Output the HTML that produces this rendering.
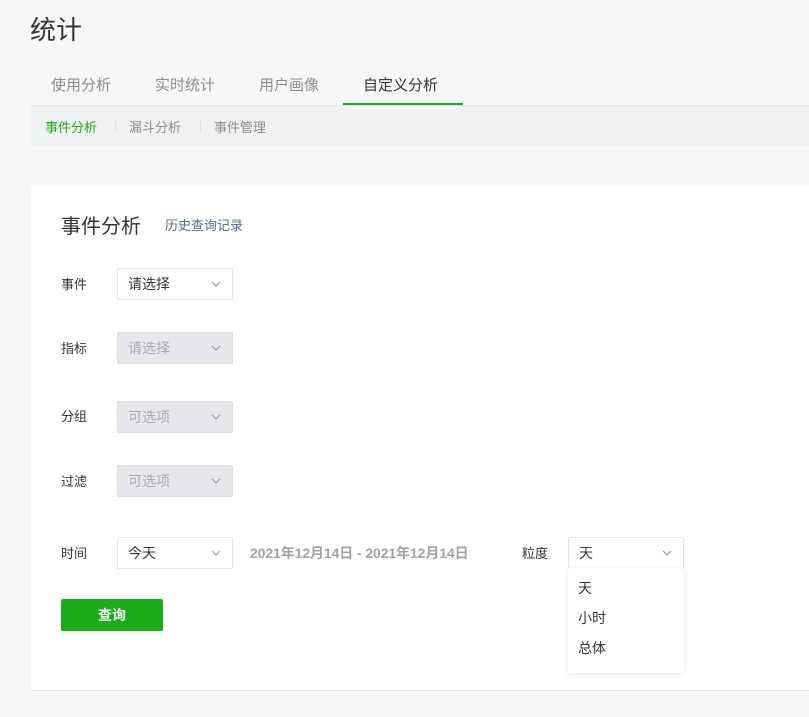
<!DOCTYPE html>
<html><head><meta charset="utf-8"><style>
*{margin:0;padding:0;box-sizing:border-box}
body{width:809px;height:717px;background:#f6f7f9;font-family:"Liberation Sans","Noto Sans CJK SC",sans-serif;position:relative;overflow:hidden;color:#353535}
.a{position:absolute;white-space:nowrap}
.sel{position:absolute;width:116px;height:32px;border:1px solid #e4e4e6;border-radius:2px;background:#fff;font-size:14px;line-height:30px;padding-left:10px;color:#353535}
.sel.d{background:#e7e7eb;color:#aaa;border-color:#ddd}
.sel svg{position:absolute;right:11px;top:12px}
.lbl{position:absolute;left:61px;font-size:13px;color:#353535}
</style></head><body>
<div class="a" style="left:30px;top:10px;font-size:26px;color:#353535">统计</div>
<div class="a" style="left:31px;top:105px;width:778px;height:1px;background:#e4e6e9"></div>
<div class="a" style="left:51px;top:74px;font-size:15px;color:#8d8d8d">使用分析</div>
<div class="a" style="left:155px;top:74px;font-size:15px;color:#8d8d8d">实时统计</div>
<div class="a" style="left:259px;top:74px;font-size:15px;color:#8d8d8d">用户画像</div>
<div class="a" style="left:363px;top:74px;font-size:15px;color:#353535">自定义分析</div>
<div class="a" style="left:343px;top:103px;width:120px;height:2px;background:#1aad19"></div>
<div class="a" style="left:31px;top:106px;width:778px;height:40px;background:#f0f1f3"></div>
<div class="a" style="left:45px;top:117px;font-size:13px;color:#1aad19">事件分析</div>
<div class="a" style="left:115px;top:119px;width:1px;height:14px;background:#e0e0e0"></div>
<div class="a" style="left:129px;top:117px;font-size:13px;color:#8d8d8d">漏斗分析</div>
<div class="a" style="left:200px;top:119px;width:1px;height:14px;background:#e0e0e0"></div>
<div class="a" style="left:214px;top:117px;font-size:13px;color:#8d8d8d">事件管理</div>
<div class="a" style="left:31px;top:186px;width:778px;height:505px;background:#fff;border-bottom:1px solid #e4e6e9"></div>
<div class="a" style="left:61px;top:210px;font-size:20px;color:#353535">事件分析</div>
<div class="a" style="left:165px;top:215px;font-size:13px;color:#576b95">历史查询记录</div>
<div class="lbl" style="top:274px">事件</div>
<div class="sel" style="left:117px;top:268px">请选择<svg width="10" height="6"><path d="M1 1l4 4 4-4" fill="none" stroke="#999" stroke-width="1.2"/></svg></div>
<div class="lbl" style="top:338px">指标</div>
<div class="sel d" style="left:117px;top:332px">请选择<svg width="10" height="6"><path d="M1 1l4 4 4-4" fill="none" stroke="#999" stroke-width="1.2"/></svg></div>
<div class="lbl" style="top:406px">分组</div>
<div class="sel d" style="left:117px;top:401px">可选项<svg width="10" height="6"><path d="M1 1l4 4 4-4" fill="none" stroke="#999" stroke-width="1.2"/></svg></div>
<div class="lbl" style="top:471px">过滤</div>
<div class="sel d" style="left:117px;top:465px">可选项<svg width="10" height="6"><path d="M1 1l4 4 4-4" fill="none" stroke="#999" stroke-width="1.2"/></svg></div>
<div class="lbl" style="top:543px">时间</div>
<div class="sel" style="left:117px;top:537px">今天<svg width="10" height="6"><path d="M1 1l4 4 4-4" fill="none" stroke="#999" stroke-width="1.2"/></svg></div>
<div class="a" style="left:250px;top:543px;font-size:14px;font-weight:bold;color:#a3a3a3;letter-spacing:-0.1px">2021年12月14日 - 2021年12月14日</div>
<div class="a" style="left:522px;top:543px;font-size:13px">粒度</div>
<div class="sel" style="left:568px;top:537px">天<svg width="10" height="6"><path d="M1 1l4 4 4-4" fill="none" stroke="#999" stroke-width="1.2"/></svg></div>
<div class="a" style="left:568px;top:568px;width:116px;height:105px;background:#fff;border-radius:3px;box-shadow:0 1px 6px rgba(0,0,0,.1);font-size:14px">
<div class="a" style="left:10px;top:10px">天</div>
<div class="a" style="left:10px;top:40px">小时</div>
<div class="a" style="left:10px;top:70px">总体</div>
</div>
<div class="a" style="left:61px;top:599px;width:102px;height:32px;background:#1aad19;border-radius:2px;color:#fff;font-size:14px;font-weight:bold;text-align:center;line-height:32px">查询</div>
</body></html>
